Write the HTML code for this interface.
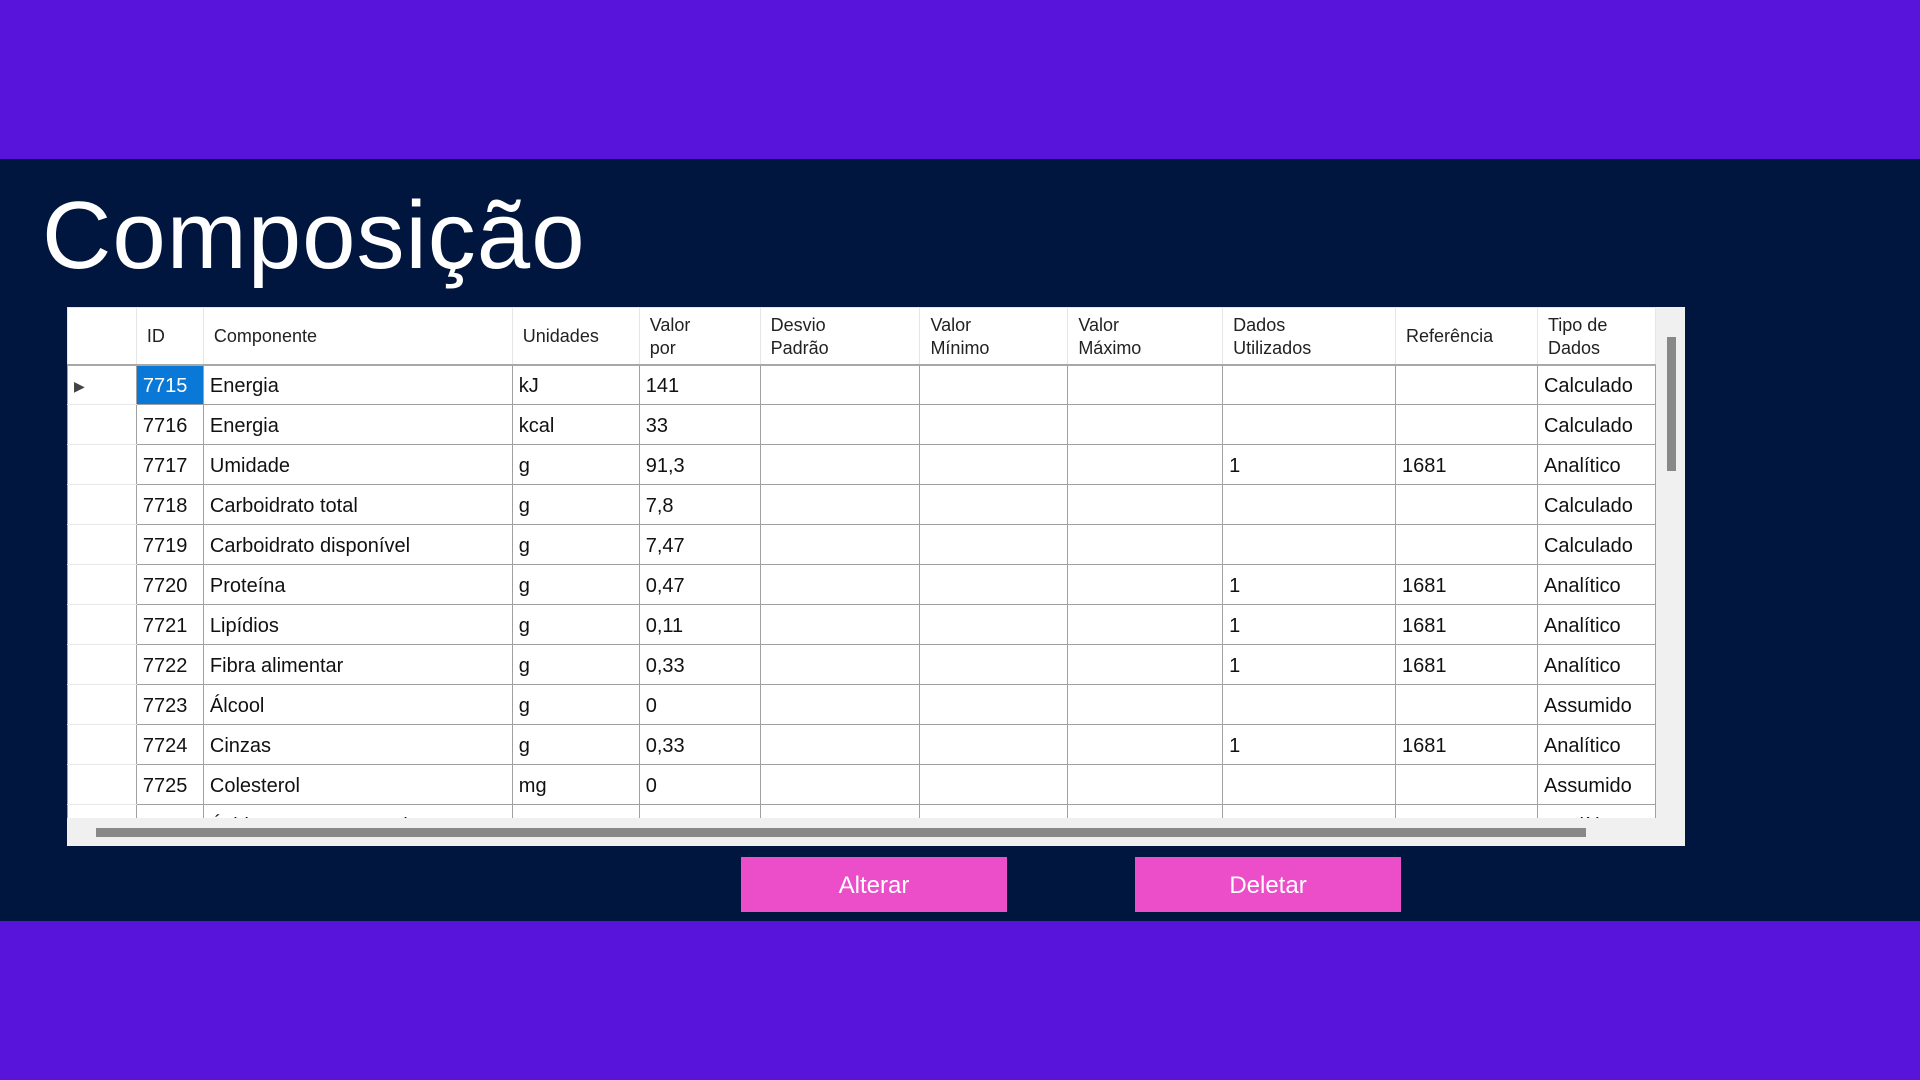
<!DOCTYPE html>
<html><head><meta charset="utf-8"><style>
*{margin:0;padding:0;box-sizing:border-box}
body{width:1920px;height:1080px;background:#5914dc;position:relative;overflow:hidden;font-family:"Liberation Sans",sans-serif}
#mid{position:absolute;left:0;top:159px;width:1920px;height:762px;background:#01163f}
h1{position:absolute;left:42px;top:183px;font-size:96px;font-weight:normal;color:#fff;letter-spacing:1px;line-height:1.1}
#grid{position:absolute;left:67px;top:307px;width:1618px;height:539px;background:#f0f0f0;overflow:hidden}
#clip{position:absolute;left:0;top:0;width:1589px;height:511px;overflow:hidden;background:#fff}
table{border-collapse:collapse;table-layout:fixed;position:absolute;left:0;top:0}
td,th{height:40px;border:1px solid #a0a0a0;font-size:20px;color:#111;padding:3px 6px 0;white-space:nowrap;text-align:left;font-weight:normal;overflow:hidden}
th{height:57px;font-size:18px;line-height:23px;color:#222;border-color:#e6e6e6;border-bottom:2px solid #a8a8a8;padding:2px 0 0 10px;background:#fff}
td.rh{border-top-color:#e8e8e8;border-bottom-color:#e8e8e8;background:#fff}
td.sel{background:#0a78d7;color:#fff}
#vs{position:absolute;left:1600px;top:30px;width:9px;height:134px;background:#888}
#hs{position:absolute;left:29px;top:521px;width:1490px;height:9px;background:#888}
.btn{position:absolute;top:857px;width:266px;height:55px;background:#ec4dc9;color:#fff;font-size:24px;text-align:center;line-height:58px}
</style></head><body>
<div id="mid"></div>
<h1>Composição</h1>
<div id="grid"><div id="clip">
<table>
<colgroup><col style="width:69px"><col style="width:67px"><col style="width:309px"><col style="width:127px"><col style="width:121px"><col style="width:160px"><col style="width:148px"><col style="width:155px"><col style="width:173px"><col style="width:142px"><col style="width:118px"></colgroup>
<tr><th></th><th>ID</th><th>Componente</th><th>Unidades</th><th>Valor<br>por</th><th>Desvio<br>Padrão</th><th>Valor<br>Mínimo</th><th>Valor<br>Máximo</th><th>Dados<br>Utilizados</th><th>Referência</th><th>Tipo de<br>Dados</th></tr>
<tr><td class="rh" style="font-size:14px;color:#444">&#9654;</td><td class="sel">7715</td><td>Energia</td><td>kJ</td><td>141</td><td></td><td></td><td></td><td></td><td></td><td>Calculado</td></tr>
<tr><td class="rh"></td><td>7716</td><td>Energia</td><td>kcal</td><td>33</td><td></td><td></td><td></td><td></td><td></td><td>Calculado</td></tr>
<tr><td class="rh"></td><td>7717</td><td>Umidade</td><td>g</td><td>91,3</td><td></td><td></td><td></td><td>1</td><td>1681</td><td>Analítico</td></tr>
<tr><td class="rh"></td><td>7718</td><td>Carboidrato total</td><td>g</td><td>7,8</td><td></td><td></td><td></td><td></td><td></td><td>Calculado</td></tr>
<tr><td class="rh"></td><td>7719</td><td>Carboidrato disponível</td><td>g</td><td>7,47</td><td></td><td></td><td></td><td></td><td></td><td>Calculado</td></tr>
<tr><td class="rh"></td><td>7720</td><td>Proteína</td><td>g</td><td>0,47</td><td></td><td></td><td></td><td>1</td><td>1681</td><td>Analítico</td></tr>
<tr><td class="rh"></td><td>7721</td><td>Lipídios</td><td>g</td><td>0,11</td><td></td><td></td><td></td><td>1</td><td>1681</td><td>Analítico</td></tr>
<tr><td class="rh"></td><td>7722</td><td>Fibra alimentar</td><td>g</td><td>0,33</td><td></td><td></td><td></td><td>1</td><td>1681</td><td>Analítico</td></tr>
<tr><td class="rh"></td><td>7723</td><td>Álcool</td><td>g</td><td>0</td><td></td><td></td><td></td><td></td><td></td><td>Assumido</td></tr>
<tr><td class="rh"></td><td>7724</td><td>Cinzas</td><td>g</td><td>0,33</td><td></td><td></td><td></td><td>1</td><td>1681</td><td>Analítico</td></tr>
<tr><td class="rh"></td><td>7725</td><td>Colesterol</td><td>mg</td><td>0</td><td></td><td></td><td></td><td></td><td></td><td>Assumido</td></tr>
<tr><td class="rh"></td><td>7726</td><td>Ácidos graxos saturados</td><td>g</td><td>0,01</td><td></td><td></td><td></td><td></td><td>1749</td><td>Analítico</td></tr>
</table></div>
<div id="vs"></div><div id="hs"></div>
</div>
<div class="btn" style="left:741px">Alterar</div>
<div class="btn" style="left:1135px">Deletar</div>
</body></html>
